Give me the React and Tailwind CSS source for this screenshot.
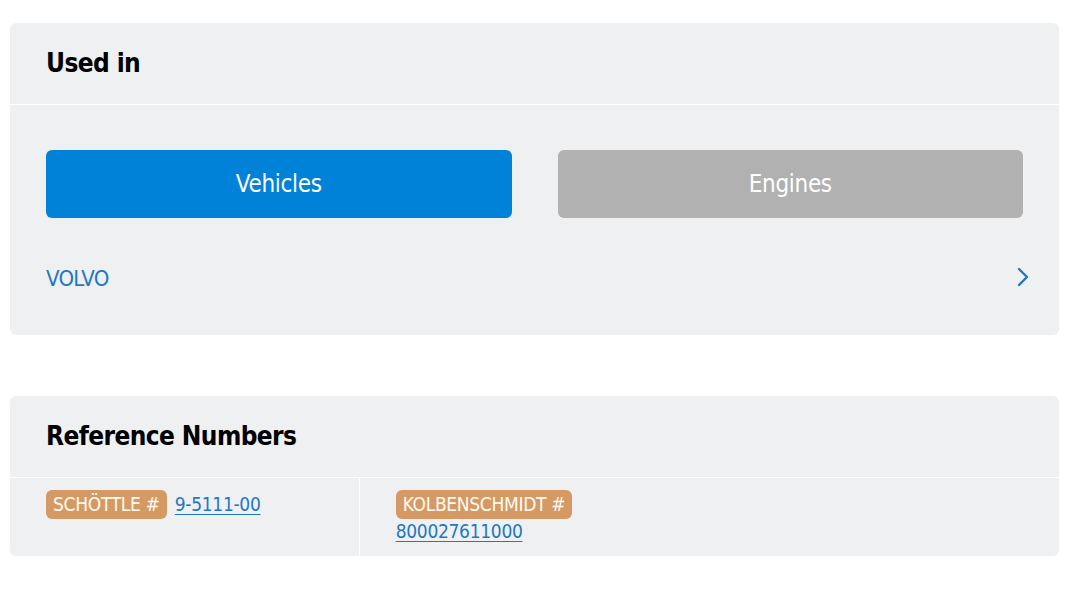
import React, { useState } from 'react';

const font = { fontFamily: '"DejaVu Sans Condensed", "Liberation Sans", sans-serif' };

const RefItem = ({ label, value }) => (
    <div className="flex flex-wrap items-baseline gap-x-[8px] px-[36px] pt-[12px] pb-[12px]">
        <span className="rounded-[6px] bg-[#d59a64] px-[7px] h-[29px] leading-[29px] text-[19px] tracking-[-0.3px] text-[#fffaf2]">{label}</span>
        <a href="#" className="text-[19px] leading-[25px] tracking-[-0.3px] text-[#1f78c1] underline underline-offset-[3px]">{value}</a>
    </div>
);

const App = () => {
    const [tab, setTab] = useState('vehicles');

    return (
        <div className="bg-white min-h-[592px] pt-[23px] pl-[10px]" style={font}>
            <div className="w-[1049px] rounded-[6px] bg-[#eff0f2]">
                <div className="h-[82px] flex items-center px-[36px] border-b border-white">
                    <h2 className="text-[26px] font-bold text-black tracking-[-0.6px]">Used in</h2>
                </div>
                <div className="px-[36px] pt-[45px] pb-[23px]">
                    <div className="flex gap-[46px]">
                        <button
                            onClick={() => setTab('vehicles')}
                            className={`flex-1 h-[68px] rounded-[6px] text-[24px] tracking-[-0.3px] text-white ${tab === 'vehicles' ? 'bg-[#0082d8]' : 'bg-[#b1b1b1]'}`}
                        >
                            Vehicles
                        </button>
                        <button
                            onClick={() => setTab('engines')}
                            className={`flex-1 h-[68px] rounded-[6px] text-[24px] tracking-[-0.3px] text-white ${tab === 'engines' ? 'bg-[#0082d8]' : 'bg-[#b1b1b1]'}`}
                        >
                            Engines
                        </button>
                    </div>
                    <a href="#" className="mt-[26px] h-[68px] flex items-center justify-between text-[#1f78c1]">
                        <span className="text-[22px] tracking-[-0.7px]">VOLVO</span>
                        <svg width="14" height="22" viewBox="0 0 14 22" className="mr-[-7px] mt-[-2px]">
                            <path d="M3 3 L11 11 L3 19" fill="none" stroke="#1f78c1" strokeWidth="2.4" strokeLinecap="round" strokeLinejoin="round" />
                        </svg>
                    </a>
                </div>
            </div>

            <div className="mt-[61px] w-[1049px] rounded-[6px] bg-[#eff0f2]">
                <div className="h-[82px] flex items-center px-[36px] border-b border-white">
                    <h2 className="text-[26px] font-bold text-black tracking-[-0.6px]">Reference Numbers</h2>
                </div>
                <div className="grid grid-cols-3">
                    <div className="border-r border-white">
                        <RefItem label="SCHÖTTLE #" value="9-5111-00" />
                    </div>
                    <div>
                        <RefItem label="KOLBENSCHMIDT #" value="800027611000" />
                    </div>
                    <div />
                </div>
            </div>
        </div>
    );
};

export default App;
